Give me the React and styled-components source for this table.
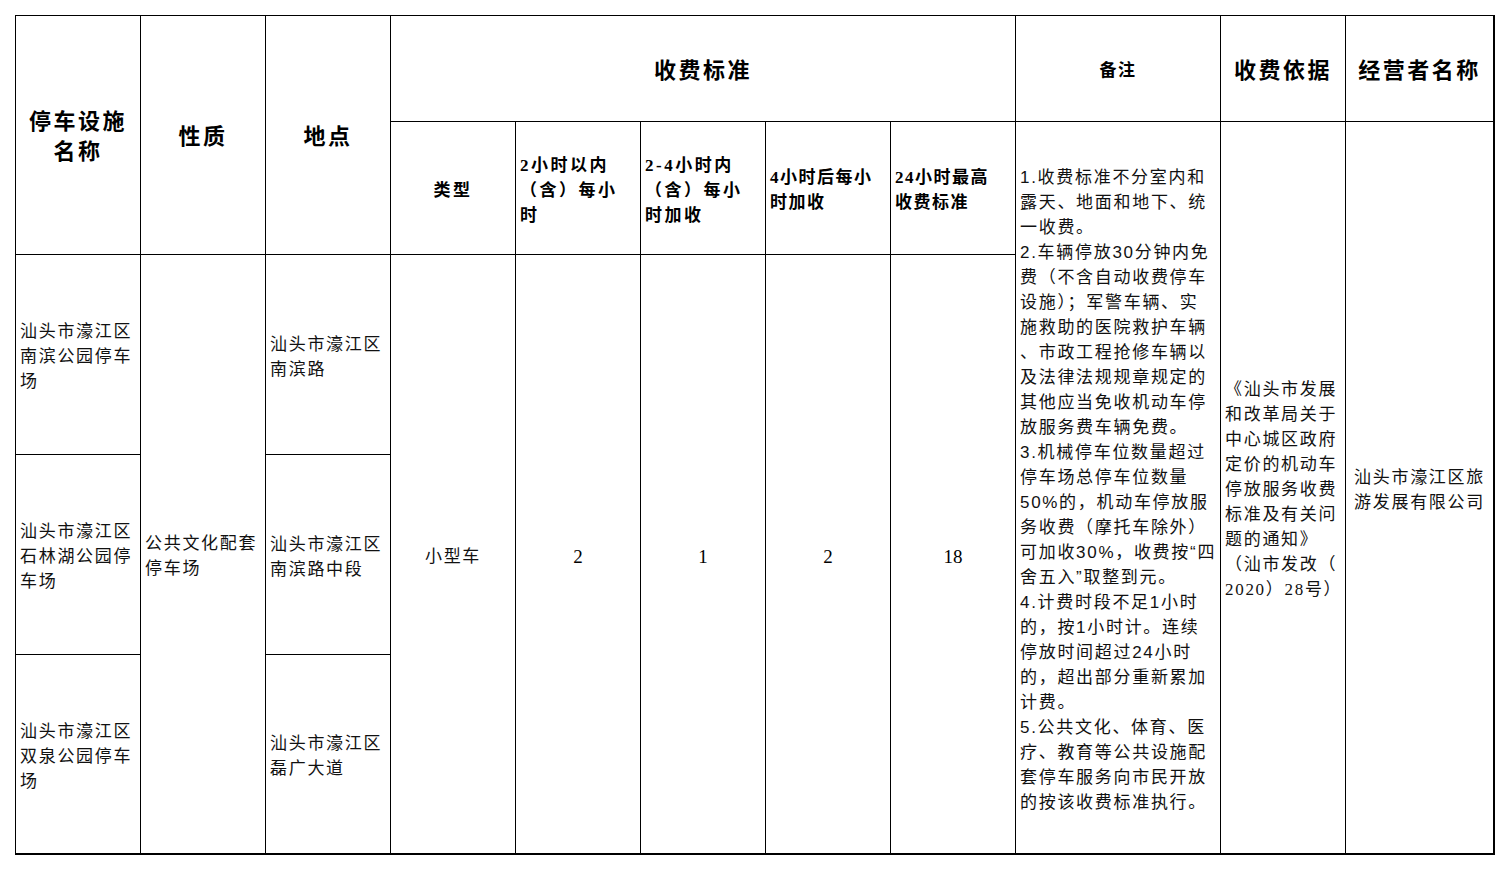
import React from "react";
import styled, { createGlobalStyle } from "styled-components";

const GlobalStyle = createGlobalStyle`
  html, body {
    margin: 0;
    padding: 0;
    background: #fff;
  }
  body {
    font-family: "Liberation Serif", "Noto Sans CJK SC", serif;
    color: #000;
  }
`;

const Sheet = styled.div`
  display: grid;
  grid-template-columns: repeat(8, 125px) 205px 125px 149px;
  grid-template-rows: 106px 133px 200px 200px 200px;
  width: max-content;
  margin: 15px 0 0 15px;
  border-top: 1px solid #000;
  border-left: 1px solid #000;
`;

const Cell = styled.div`
  box-sizing: border-box;
  grid-column: ${(p) => p.$col};
  grid-row: ${(p) => p.$row};
  display: flex;
  flex-direction: column;
  justify-content: center;
  padding: 4px 4px 0;
  text-align: ${(p) => p.$align || "left"};
  border-right: ${(p) => (p.$lastCol ? 2 : 1)}px solid #000;
  border-bottom: ${(p) => (p.$lastRow ? 2 : 1)}px solid #000;
  overflow: hidden;
`;

const Title = styled.div`
  font-size: 22px;
  line-height: 30px;
  font-weight: 700;
  letter-spacing: 2.5px;
  white-space: nowrap;
`;

const SubTitle = styled.div`
  font-size: 17px;
  line-height: 25px;
  font-weight: 700;
  letter-spacing: ${(p) => (p.$tight ? "1.5px" : "2.5px")};
  white-space: nowrap;
`;

const Text = styled.div`
  font-size: 17px;
  line-height: 25px;
  letter-spacing: 1.7px;
  white-space: nowrap;
  color: #111;
`;

const NoteLine = styled(Text)`
  font-family: "Liberation Sans", "Noto Sans CJK SC", sans-serif;
`;

const Num = styled.div`
  font-size: 19px;
  line-height: 25px;
`;

const Lines = ({ as: Comp = Text, lines }) =>
  lines.map((l, i) => <Comp key={i}>{l}</Comp>);

const parks = [
  {
    name: ["汕头市濠江区", "南滨公园停车", "场"],
    place: ["汕头市濠江区", "南滨路"],
  },
  {
    name: ["汕头市濠江区", "石林湖公园停", "车场"],
    place: ["汕头市濠江区", "南滨路中段"],
  },
  {
    name: ["汕头市濠江区", "双泉公园停车", "场"],
    place: ["汕头市濠江区", "磊广大道"],
  },
];

const subHeads = [
  { lines: ["类型"], align: "center" },
  { lines: ["2小时以内", "（含）每小", "时"] },
  { lines: ["2-4小时内", "（含）每小", "时加收"] },
  { lines: ["4小时后每小", "时加收"], tight: true },
  { lines: ["24小时最高", "收费标准"], tight: true },
];

const fees = ["小型车", "2", "1", "2", "18"];

const notes = [
  "1.收费标准不分室内和",
  "露天、地面和地下、统",
  "一收费。",
  "2.车辆停放30分钟内免",
  "费（不含自动收费停车",
  "设施）；军警车辆、实",
  "施救助的医院救护车辆",
  "、市政工程抢修车辆以",
  "及法律法规规章规定的",
  "其他应当免收机动车停",
  "放服务费车辆免费。",
  "3.机械停车位数量超过",
  "停车场总停车位数量",
  "50%的，机动车停放服",
  "务收费（摩托车除外）",
  "可加收30%，收费按“四",
  "舍五入”取整到元。",
  "4.计费时段不足1小时",
  "的，按1小时计。连续",
  "停放时间超过24小时",
  "的，超出部分重新累加",
  "计费。",
  "5.公共文化、体育、医",
  "疗、教育等公共设施配",
  "套停车服务向市民开放",
  "的按该收费标准执行。",
];

const basis = [
  "《汕头市发展",
  "和改革局关于",
  "中心城区政府",
  "定价的机动车",
  "停放服务收费",
  "标准及有关问",
  "题的通知》",
  "（汕市发改（",
  "2020）28号）",
];

export default function App() {
  return (
    <>
      <GlobalStyle />
      <Sheet>
        <Cell $col="1" $row="1 / 3" $align="center">
          <Title>停车设施</Title>
          <Title>名称</Title>
        </Cell>
        <Cell $col="2" $row="1 / 3" $align="center">
          <Title>性质</Title>
        </Cell>
        <Cell $col="3" $row="1 / 3" $align="center">
          <Title>地点</Title>
        </Cell>
        <Cell $col="4 / 9" $row="1" $align="center">
          <Title>收费标准</Title>
        </Cell>
        <Cell $col="9" $row="1" $align="center">
          <SubTitle $tight>备注</SubTitle>
        </Cell>
        <Cell $col="10" $row="1" $align="center">
          <Title>收费依据</Title>
        </Cell>
        <Cell $col="11" $row="1" $align="center" $lastCol>
          <Title>经营者名称</Title>
        </Cell>

        {subHeads.map((h, i) => (
          <Cell key={i} $col={String(4 + i)} $row="2" $align={h.align}>
            {h.lines.map((l) => (
              <SubTitle key={l} $tight={h.tight}>
                {l}
              </SubTitle>
            ))}
          </Cell>
        ))}

        <Cell $col="9" $row="2 / 6" $lastRow>
          <Lines as={NoteLine} lines={notes} />
        </Cell>
        <Cell $col="10" $row="2 / 6" $lastRow>
          <Lines lines={basis} />
        </Cell>
        <Cell $col="11" $row="2 / 6" $align="center" $lastCol $lastRow>
          <Lines lines={["汕头市濠江区旅", "游发展有限公司"]} />
        </Cell>

        {parks.map((p, i) => (
          <React.Fragment key={i}>
            <Cell $col="1" $row={String(3 + i)} $lastRow={i === 2}>
              <Lines lines={p.name} />
            </Cell>
            <Cell $col="3" $row={String(3 + i)} $lastRow={i === 2}>
              <Lines lines={p.place} />
            </Cell>
          </React.Fragment>
        ))}
        <Cell $col="2" $row="3 / 6" $lastRow>
          <Lines lines={["公共文化配套", "停车场"]} />
        </Cell>

        {fees.map((f, i) => (
          <Cell key={i} $col={String(4 + i)} $row="3 / 6" $align="center" $lastRow>
            {i === 0 ? <Text>{f}</Text> : <Num>{f}</Num>}
          </Cell>
        ))}
      </Sheet>
    </>
  );
}
